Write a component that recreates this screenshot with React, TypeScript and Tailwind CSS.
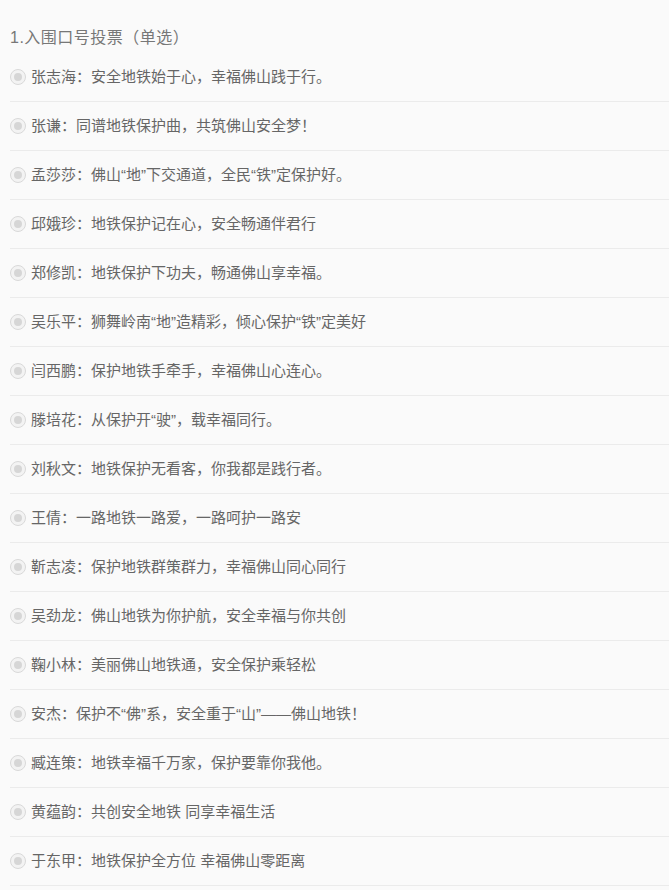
const options = [
  "张志海：安全地铁始于心，幸福佛山践于行。",
  "张谦：同谱地铁保护曲，共筑佛山安全梦！",
  "孟莎莎：佛山“地”下交通道，全民“铁”定保护好。",
  "邱娥珍：地铁保护记在心，安全畅通伴君行",
  "郑修凯：地铁保护下功夫，畅通佛山享幸福。",
  "吴乐平：狮舞岭南“地”造精彩，倾心保护“铁”定美好",
  "闫西鹏：保护地铁手牵手，幸福佛山心连心。",
  "滕培花：从保护开“驶”，载幸福同行。",
  "刘秋文：地铁保护无看客，你我都是践行者。",
  "王倩：一路地铁一路爱，一路呵护一路安",
  "靳志凌：保护地铁群策群力，幸福佛山同心同行",
  "吴劲龙：佛山地铁为你护航，安全幸福与你共创",
  "鞠小林：美丽佛山地铁通，安全保护乘轻松",
  "安杰：保护不“佛”系，安全重于“山”——佛山地铁！",
  "臧连策：地铁幸福千万家，保护要靠你我他。",
  "黄蕴韵：共创安全地铁 同享幸福生活",
  "于东甲：地铁保护全方位 幸福佛山零距离",
];

function Radio() {
  return (
    <span className="flex h-[16px] w-[16px] shrink-0 items-center justify-center rounded-full border border-[#d9d9d9] bg-[#f3f3f3]">
      <span className="h-[8px] w-[8px] rounded-full bg-[#d6d6d6]" />
    </span>
  );
}

export default function App() {
  return (
    <div
      className="min-h-[890px] bg-[#fafafa] pl-[10px] text-[#666]"
      style={{ fontFamily: '"Liberation Sans", "Noto Sans CJK SC", sans-serif' }}
    >
      <div className="pt-[26px] mb-[3px] text-[16px] leading-[24px] tracking-[0.5px] text-[#777]">
        1.入围口号投票（单选）
      </div>
      {options.map((text) => (
        <label
          key={text}
          className="flex h-[49px] items-center gap-[5px] border-b border-[#ebebeb] pb-[1px]"
        >
          <Radio />
          <span className="text-[15px] leading-[20px] text-[#666]">{text}</span>
        </label>
      ))}
    </div>
  );
}
